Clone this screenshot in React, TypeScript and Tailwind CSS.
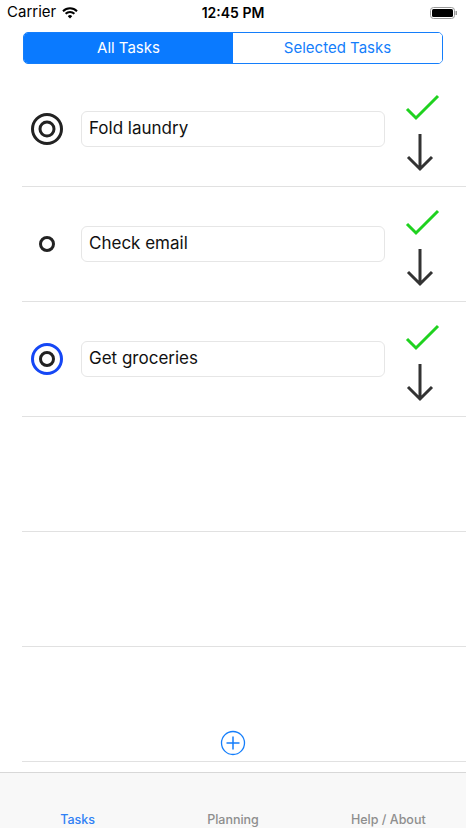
import React from "react";

// =============================================================================
// TASK LIST SCREEN
// =============================================================================

type Task = { id: number; title: string; kind: "double" | "small" | "blue" };

const tasks: Task[] = [
  { id: 1, title: "Fold laundry", kind: "double" },
  { id: 2, title: "Check email", kind: "small" },
  { id: 3, title: "Get groceries", kind: "blue" },
];

const font = { fontFamily: '"Helvetica Neue", Inter, "Liberation Sans", sans-serif' };

const StatusIcon = ({ kind }: { kind: Task["kind"] }) => (
  <svg width="40" height="40" viewBox="0 0 40 40">
    {kind === "double" && (
      <>
        <circle cx="20" cy="20" r="14.5" fill="none" stroke="#222" strokeWidth="3" />
        <circle cx="20" cy="20" r="7" fill="none" stroke="#222" strokeWidth="3" />
      </>
    )}
    {kind === "small" && (
      <circle cx="20" cy="20" r="6.5" fill="none" stroke="#222" strokeWidth="3" />
    )}
    {kind === "blue" && (
      <>
        <circle cx="20" cy="20" r="14.5" fill="none" stroke="#1547f5" strokeWidth="3" />
        <circle cx="20" cy="20" r="6.5" fill="none" stroke="#222" strokeWidth="3" />
      </>
    )}
  </svg>
);

const Actions = () => (
  <div className="flex flex-col items-center w-[40px]">
    <svg width="40" height="30" viewBox="0 0 40 30">
      <path d="M7 17 L16 26 L38 4" fill="none" stroke="#1fd21f" strokeWidth="3" />
    </svg>
    <svg width="40" height="40" viewBox="0 0 40 40" className="mt-[11px]">
      <path d="M20 1 V36 M8 24 L20 36 L32 24" fill="none" stroke="#333" strokeWidth="3" />
    </svg>
  </div>
);

export default function App() {
  return (
    <div className="w-[466px] h-[828px] bg-white flex flex-col overflow-hidden" style={font}>
      {/* Status bar */}
      <div className="h-[25px] flex items-center justify-between px-[7px] text-[15px] text-black">
        <div className="flex items-center gap-[6px] w-[120px]">
          <span>Carrier</span>
          <svg width="16" height="12" viewBox="0 0 16 12">
            <path d="M1 4.2 A10 10 0 0 1 15 4.2" fill="none" stroke="#000" strokeWidth="2" />
            <path d="M3.6 6.8 A6.3 6.3 0 0 1 12.4 6.8" fill="none" stroke="#000" strokeWidth="2" />
            <path d="M8 11.5 L5.8 9.3 A3 3 0 0 1 10.2 9.3 Z" fill="#000" />
          </svg>
        </div>
        <span className="font-semibold text-[14px]">12:45 PM</span>
        <div className="w-[120px] flex justify-end pr-[1px]">
          <svg width="28" height="12" viewBox="0 0 28 12">
            <rect x="0.5" y="0.5" width="24" height="11" rx="3" fill="none" stroke="#999" />
            <rect x="2" y="2" width="21" height="8" rx="1.5" fill="#000" />
            <rect x="25.5" y="4" width="1.5" height="4" fill="#999" />
          </svg>
        </div>
      </div>

      {/* Segmented control */}
      <div className="px-[23px] pt-[7px]">
        <div className="flex h-[32px] border border-[#147efb] rounded-[5px] overflow-hidden text-[15px]">
          <div className="flex-1 bg-[#0a7aff] text-white flex items-center justify-center">All Tasks</div>
          <div className="flex-1 bg-white text-[#147efb] flex items-center justify-center">Selected Tasks</div>
        </div>
      </div>

      {/* Rows */}
      <div className="flex flex-col mt-[8px]">
        {tasks.map((t) => (
          <div key={t.id} className="ml-[22px] h-[115px] border-b border-[#e1e1e1] flex items-center">
            <div className="w-[50px] flex justify-center mr-[9px]">
              <StatusIcon kind={t.kind} />
            </div>
            <div className="w-[304px] h-[36px] border border-[#e6e6e6] rounded-[6px] flex items-center px-[7px] text-[17px] text-[#111]">
              {t.title}
            </div>
            <div className="ml-[15px] self-start pt-[20px]">
              <Actions />
            </div>
          </div>
        ))}
        {[0, 1].map((i) => (
          <div key={i} className="ml-[22px] h-[115px] border-b border-[#e1e1e1]" />
        ))}
        <div className="ml-[22px] h-[115px] border-b border-[#e1e1e1] flex items-end justify-center pb-[5px]">
          <svg width="26" height="26" viewBox="0 0 26 26" className="-ml-[22px]">
            <circle cx="13" cy="13" r="11.5" fill="none" stroke="#147efb" strokeWidth="1.3" />
            <path d="M13 6.5 V19.5 M6.5 13 H19.5" stroke="#147efb" strokeWidth="1.5" />
          </svg>
        </div>
      </div>

      {/* Tab bar */}
      <div className="mt-auto h-[56px] bg-[#f8f8f8] border-t border-[#d8d8d8] flex items-end pb-[1px] text-[12.5px] font-medium leading-[15px]">
        <div className="flex-1 text-center text-[#2f80f5]">Tasks</div>
        <div className="flex-1 text-center text-[#8e8e8e]">Planning</div>
        <div className="flex-1 text-center text-[#8e8e8e]">Help / About</div>
      </div>
    </div>
  );
}
